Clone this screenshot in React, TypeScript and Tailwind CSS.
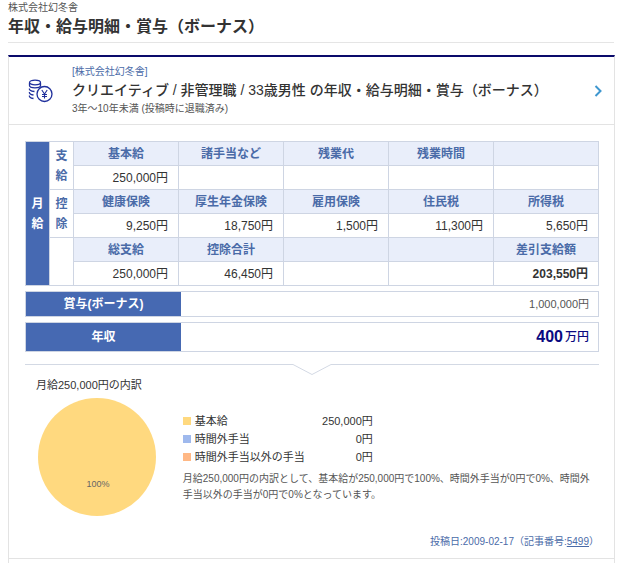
const font = "[font-family:'Liberation_Sans','Noto_Sans_CJK_JP',sans-serif]";

const headCell = "h-6 border border-[#ced5e3] bg-[#e9eefa] text-center text-[12px] font-bold text-[#4a6ba8] p-0";
const valueCell = "h-6 border border-[#ced5e3] bg-white text-right text-[12px] text-[#333] pr-[10px] p-0";

const rows = [
  { side: "支給", heads: ["基本給", "諸手当など", "残業代", "残業時間", ""], values: ["250,000円", "", "", "", ""] },
  { side: "控除", heads: ["健康保険", "厚生年金保険", "雇用保険", "住民税", "所得税"], values: ["9,250円", "18,750円", "1,500円", "11,300円", "5,650円"] },
  { side: "", heads: ["総支給", "控除合計", "", "", "差引支給額"], values: ["250,000円", "46,450円", "", "", "203,550円"] },
];

const legend = [
  { color: "bg-[#ffd97f]", label: "基本給", value: "250,000円" },
  { color: "bg-[#9fb9ed]", label: "時間外手当", value: "0円" },
  { color: "bg-[#ffb885]", label: "時間外手当以外の手当", value: "0円" },
];

const CoinIcon = () => (
  <svg width="26" height="24" viewBox="0 0 26 24" fill="none" stroke="#1f2f9c" strokeWidth="1.3">
    <ellipse cx="8" cy="3.5" rx="5.5" ry="2.3" />
    <path d="M2.5 4v2.5c0 1.300 2.500 2.300 5.500 2.300s5.500-1 5.500-2.300V4" />
    <path d="M2.500 9.500c-.5 1 .5 2.500 5 3" />
    <path d="M2.500 13c-.5 1 .5 2.500 4 3" />
    <path d="M2.500 16.500c-.5 1 .5 2.500 4 3" />
    <circle cx="17.500" cy="15" r="7.500" />
    <path d="M14.800 11l2.700 4 2.700-4M17.500 15v4.500M15 15.500h5M15 17.500h5" strokeWidth="1.100" />
  </svg>
);

const SalaryTable = () => (
  <table className="w-[574px] table-fixed border-collapse">
    <colgroup>
      <col className="w-6" />
      <col className="w-6" />
      <col className="w-[105px]" />
      <col className="w-[105px]" />
      <col className="w-[105px]" />
      <col className="w-[105px]" />
      <col className="w-[105px]" />
    </colgroup>
    <tbody>
      {rows.map((row, i) => (
        <>
          <tr key={`h${i}`}>
            {i === 0 && (
              <th rowSpan={6} className="border border-[#ced5e3] bg-[#4669b2] text-[12px] leading-[20px] font-bold text-white p-0">
                月<br />給
              </th>
            )}
            <td rowSpan={2} className="border border-[#ced5e3] bg-white text-center text-[12px] leading-[20px] font-bold text-[#4a6ba8] p-0">
              {row.side.charAt(0)}
              {row.side && <br />}
              {row.side.charAt(1)}
            </td>
            {row.heads.map((h, j) => (
              <td key={j} className={headCell}>{h}</td>
            ))}
          </tr>
          <tr key={`v${i}`}>
            {row.values.map((v, j) => (
              <td key={j} className={`${valueCell} ${i === 2 && j === 4 ? "font-bold" : ""}`}>{v}</td>
            ))}
          </tr>
        </>
      ))}
    </tbody>
  </table>
);

const App = () => {
  return (
    <div className={`${font} w-[622px] h-[563px] overflow-hidden bg-white text-[#333]`}>
      <div className="mx-2 pt-[1px]">
        <p className="text-[10px] leading-[13px] text-[#555]">株式会社幻冬舎</p>
        <h1 className="mt-[2px] h-[26px] border-b-0 text-[16px] leading-[22px] font-bold text-[#333]">年収・給与明細・賞与（ボーナス）</h1>
      </div>
      <div className="mx-2 w-[606px] border-t border-[#e5e5e5]" />

      <div className="mx-2 mt-3 w-[607px] border-x border-[#e3e3e3] border-t-2 border-t-[#0a0a6b]">
        <div className="flex h-[68px] items-center border-b border-[#e3e3e3] pl-[18px] pr-[11px]">
          <CoinIcon />
          <div className="ml-[19px] flex-1">
            <p className="text-[10px] leading-[14px] text-[#4a6ba8]">[株式会社幻冬舎]</p>
            <p className="text-[14px] leading-[22px] font-medium text-[#333]">クリエイティブ / 非管理職 / 33歳男性 の年収・給与明細・賞与（ボーナス）</p>
            <p className="text-[10px] leading-[16px] text-[#555]">3年～10年未満 (投稿時に退職済み)</p>
          </div>
          <svg width="9" height="12" viewBox="0 0 9 12" fill="none" stroke="#3f97cf" strokeWidth="2">
            <path d="M1.500 1l5 5-5 5" />
          </svg>
        </div>

        <div className="px-4 pt-4">
          <SalaryTable />

          <div className="mt-[5px] flex h-[26px] w-[574px] border border-[#ced5e3]">
            <div className="flex w-[155px] items-center justify-center bg-[#4669b2] text-[12px] font-bold text-white">賞与(ボーナス)</div>
            <div className="flex flex-1 items-center justify-end pr-[9px] text-[11px] text-[#555]">1,000,000円</div>
          </div>
          <div className="mt-[5px] flex h-[30px] w-[574px] border border-[#ced5e3]">
            <div className="flex w-[155px] items-center justify-center bg-[#4669b2] text-[12px] font-bold text-white">年収</div>
            <div className="flex flex-1 items-center justify-end pr-[9px] font-bold text-[#0a0a80]">
              <span className="text-[16px]">400</span>
              <span className="ml-[2px] text-[12px] leading-[18px] font-medium">万円</span>
            </div>
          </div>

          <svg width="574" height="12" viewBox="0 0 574 12" fill="none" stroke="#d3d9e4" className="mt-3 block">
            <path d="M0 .5h268l19 10 19-10h268" />
          </svg>

          <p className="mt-[2px] pl-[11px] text-[11px] leading-[14px] text-[#333]">月給250,000円の内訳</p>

          <div className="mt-[6px] flex">
            <div className="ml-[13px] flex h-[118px] w-[118px] items-end justify-center rounded-full bg-[#ffd97f] pb-[26px] pl-[2px] text-[9px] leading-[12px] text-[#666]">100%</div>
            <div className="ml-[27px] w-[416px] pt-[14px]">
              {legend.map((item) => (
                <div key={item.label} className="flex h-[18px] w-[190px] items-center text-[11px] text-[#333]">
                  <span className={`h-2 w-2 ${item.color}`} />
                  <span className="ml-1 flex-1">{item.label}</span>
                  <span>{item.value}</span>
                </div>
              ))}
              <p className="mt-[5px] text-[10px] leading-[16px] text-[#555]">
                月給250,000円の内訳として、基本給が250,000円で100%、時間外手当が0円で0%、時間外手当以外の手当が0円で0%となっています。
              </p>
            </div>
          </div>
        </div>

        <p className="mt-[19px] pr-[15px] text-right text-[10px] leading-[14px] text-[#4a6ba8]">
          投稿日:2009-02-17（記事番号:<span className="underline">5499</span>）
        </p>
        <div className="mt-[9px] h-[9px] border-t border-[#e3e3e3] pl-[17px] pt-[7px]">
          <div className="h-1 w-[100px] rounded-t-sm bg-[#dde4f3]" />
        </div>
      </div>
    </div>
  );
};

export default App;
